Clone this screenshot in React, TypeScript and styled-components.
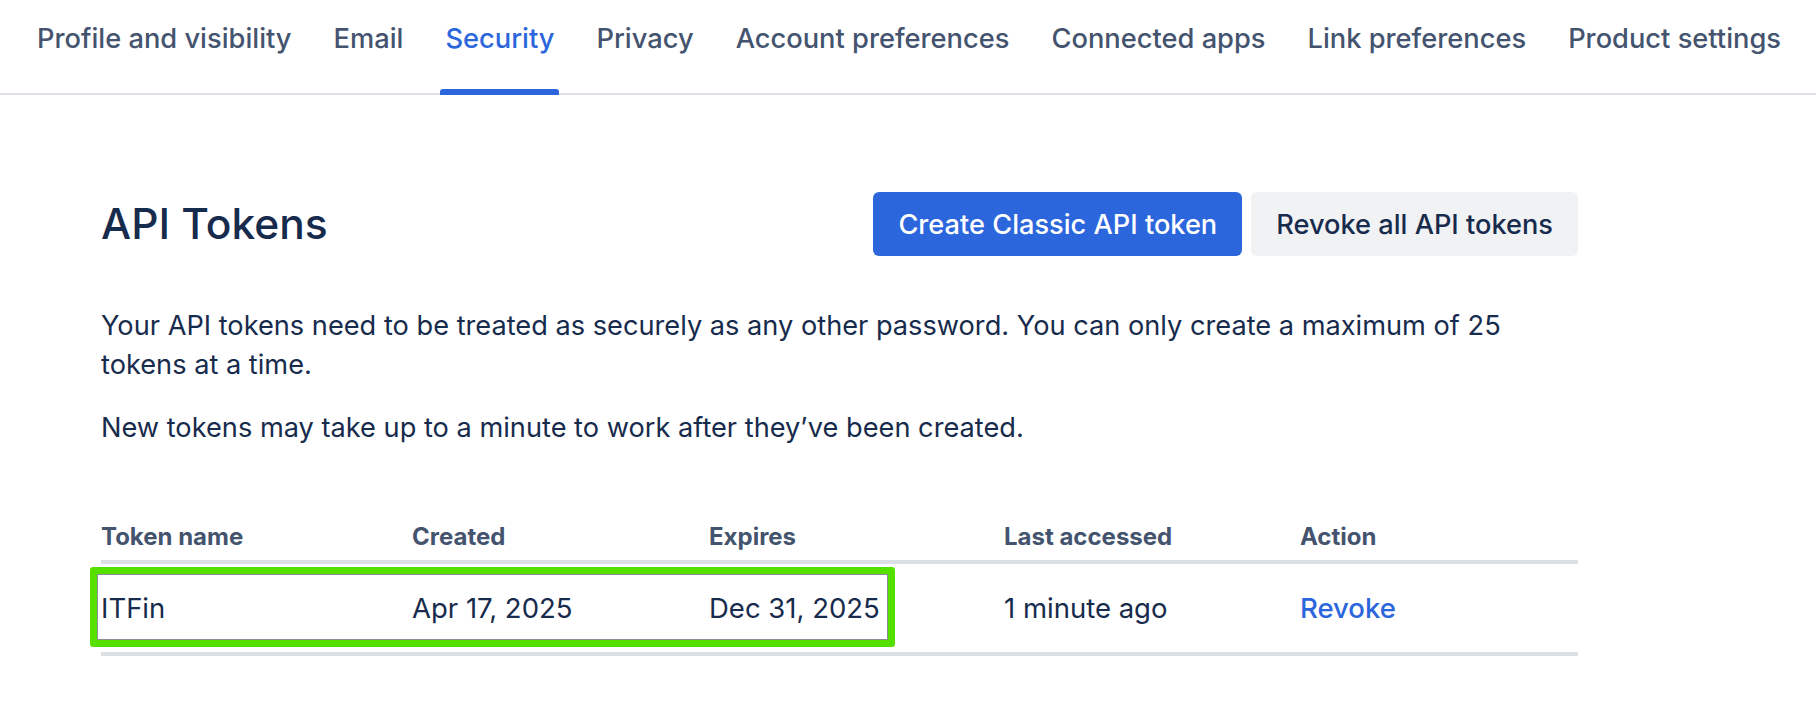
import React from "react";
import styled, { createGlobalStyle } from "styled-components";

const GlobalStyle = createGlobalStyle`
  html, body { margin: 0; padding: 0; background: #ffffff; }
  body { font-family: Inter, "Noto Sans", "Liberation Sans", sans-serif; color: #172B4D; }
  * { box-sizing: border-box; }
`;

const Page = styled.div`
  width: 1816px;
  min-height: 722px;
  background: #fff;
`;

const TabBar = styled.nav`
  display: flex;
  gap: 32px;
  padding: 0 0 0 32px;
  height: 95px;
  border-bottom: 2px solid #DFE1E6;
`;

const Tab = styled.a<{ $active?: boolean }>`
  position: relative;
  display: block;
  padding: 23px 5px 0;
  font-size: 27.27px;
  line-height: 32px;
  font-weight: 500;
  color: ${(p) => (p.$active ? "#2C66DC" : "#44546F")};
  text-decoration: none;
  white-space: nowrap;
  cursor: pointer;
  &::after {
    content: "";
    display: ${(p) => (p.$active ? "block" : "none")};
    position: absolute;
    left: 0;
    right: 0;
    bottom: -2px;
    height: 6px;
    border-radius: 3px 3px 0 0;
    background: #2C66DC;
  }
`;

const Content = styled.main`
  width: 1578px;
  padding: 97px 0 0 101px;
`;

const HeaderRow = styled.div`
  display: flex;
  align-items: center;
  justify-content: space-between;
  height: 64px;
`;

const Title = styled.h1`
  margin: 0;
  font-size: 42.5px;
  line-height: 48px;
  font-weight: 500;
  color: #172B4D;
  letter-spacing: 0;
`;

const ButtonGroup = styled.div`
  display: flex;
  gap: 9px;
`;

const Button = styled.button<{ $primary?: boolean }>`
  height: 64px;
  padding: 0 25px;
  border: none;
  border-radius: 6px;
  font-family: inherit;
  font-size: 27.2px;
  font-weight: 500;
  background: ${(p) => (p.$primary ? "#2C66DC" : "#F1F2F4")};
  color: ${(p) => (p.$primary ? "#ffffff" : "#172B4D")};
  cursor: pointer;
  white-space: nowrap;
`;

const Paragraph = styled.p<{ $gap?: number }>`
  margin: ${(p) => p.$gap ?? 0}px 0 0;
  font-size: 27.2px;
  line-height: 39px;
  color: #172B4D;
  max-width: 1450px;
`;

const Table = styled.div`
  margin-top: 75px;
  width: 1477px;
`;

const columns = "311px 297px 295px 296px 1fr";

const HeadRow = styled.div`
  display: grid;
  grid-template-columns: ${columns};
  padding-bottom: 9px;
  border-bottom: 4px solid #DCDFE4;
`;

const HeadCell = styled.div`
  font-size: 24px;
  line-height: 29px;
  font-weight: 700;
  color: #44546F;
`;

const BodyRow = styled.div`
  position: relative;
  display: grid;
  grid-template-columns: ${columns};
  align-items: center;
  height: 92px;
  border-bottom: 4px solid #DCDFE4;
`;

const Cell = styled.div`
  font-size: 27.5px;
  line-height: 32px;
  color: #172B4D;
`;

const LinkCell = styled.a`
  font-size: 27.5px;
  line-height: 32px;
  font-weight: 500;
  color: #2C66DC;
  text-decoration: none;
  cursor: pointer;
`;

const Highlight = styled.div`
  position: absolute;
  left: -11px;
  top: 3px;
  width: 805px;
  height: 80px;
  border: 7px solid #56E000;
  border-radius: 3px;
  box-shadow: inset 0 0 0 1px #8a8f98;
  pointer-events: none;
`;

const tabs = [
  "Profile and visibility",
  "Email",
  "Security",
  "Privacy",
  "Account preferences",
  "Connected apps",
  "Link preferences",
  "Product settings",
];

export default function App() {
  return (
    <Page>
      <GlobalStyle />
      <TabBar>
        {tabs.map((t) => (
          <Tab key={t} $active={t === "Security"}>
            {t}
          </Tab>
        ))}
      </TabBar>
      <Content>
        <HeaderRow>
          <Title>API Tokens</Title>
          <ButtonGroup>
            <Button $primary>Create Classic API token</Button>
            <Button>Revoke all API tokens</Button>
          </ButtonGroup>
        </HeaderRow>
        <Paragraph $gap={50}>
          Your API tokens need to be treated as securely as any other password. You can only create a maximum of 25
          tokens at a time.
        </Paragraph>
        <Paragraph $gap={24}>New tokens may take up to a minute to work after they’ve been created.</Paragraph>
        <Table>
          <HeadRow>
            <HeadCell>Token name</HeadCell>
            <HeadCell>Created</HeadCell>
            <HeadCell>Expires</HeadCell>
            <HeadCell>Last accessed</HeadCell>
            <HeadCell>Action</HeadCell>
          </HeadRow>
          <BodyRow>
            <Cell>ITFin</Cell>
            <Cell>Apr 17, 2025</Cell>
            <Cell>Dec 31, 2025</Cell>
            <Cell>1 minute ago</Cell>
            <LinkCell>Revoke</LinkCell>
            <Highlight />
          </BodyRow>
        </Table>
      </Content>
    </Page>
  );
}
